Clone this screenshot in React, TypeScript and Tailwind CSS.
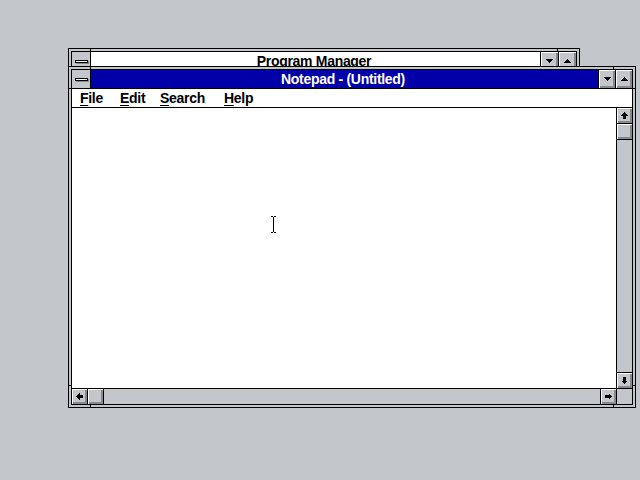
import type { ReactNode } from "react";

const FACE = "bg-[#c3c7cb]";
const RAISED =
  "bg-[#c3c7cb] shadow-[inset_1px_1px_0_#fff,inset_-1px_-1px_0_#868a8e,inset_-2px_-2px_0_#868a8e]";

function Tri({ up }: { up?: boolean }) {
  return (
    <svg width="7" height="4" viewBox="0 0 7 4" shapeRendering="crispEdges">
      <polygon points={up ? "3.5,0 7,4 0,4" : "0,0 7,0 3.5,4"} fill="#000" />
    </svg>
  );
}

function Arrow({ dir }: { dir: "up" | "down" | "left" | "right" }) {
  const rot = { up: 0, right: 90, down: 180, left: 270 }[dir];
  return (
    <svg width="7" height="7" viewBox="0 0 7 7" shapeRendering="crispEdges" style={{ transform: `rotate(${rot}deg)` }}>
      <polygon points="3.5,0 7,3.5 5,3.5 5,7 2,7 2,3.5 0,3.5" fill="#000" />
    </svg>
  );
}

function SysMenu() {
  return (
    <div className={`flex w-[18px] shrink-0 items-center justify-center ${FACE}`}>
      <div className="h-[3px] w-[13px] border border-black bg-white shadow-[1px_1px_0_#868a8e]" />
    </div>
  );
}

function CapButton({ up, w }: { up?: boolean; w: string }) {
  return (
    <div className={`flex shrink-0 items-center justify-center border-l border-black ${w} ${RAISED}`}>
      <Tri up={up} />
    </div>
  );
}

// resize notches drawn across the thick frame, 22px in from each corner
function Notches() {
  return (
    <>
      <div className="absolute left-[21px] top-0 h-[2px] w-px bg-black" />
      <div className="absolute right-[21px] top-0 h-[2px] w-px bg-black" />
      <div className="absolute bottom-0 left-[21px] h-[2px] w-px bg-black" />
      <div className="absolute bottom-0 right-[21px] h-[2px] w-px bg-black" />
      <div className="absolute left-0 top-[21px] h-px w-[2px] bg-black" />
      <div className="absolute bottom-[21px] left-0 h-px w-[2px] bg-black" />
      <div className="absolute right-0 top-[21px] h-px w-[2px] bg-black" />
      <div className="absolute bottom-[21px] right-0 h-px w-[2px] bg-black" />
    </>
  );
}

function Window({
  title,
  active,
  btnW,
  className,
  children,
}: {
  title: string;
  active?: boolean;
  btnW: string;
  className: string;
  children?: ReactNode;
}) {
  return (
    <div className={`absolute border border-black p-[2px] ${FACE} ${className}`}>
      <Notches />
      <div className="flex h-full flex-col border border-black">
        <div className="flex h-[19px] shrink-0 border-b border-black">
          <SysMenu />
          <div
            className={`flex min-w-0 flex-1 items-center justify-center overflow-hidden border-l border-black pr-[3px] text-[14px] leading-[18px] font-bold tracking-[-0.3px] ${
              active ? "bg-[#0000a8] text-white" : "bg-white text-black"
            }`}
          >
            {title}
          </div>
          <CapButton w={btnW} />
          <CapButton w={btnW} up />
        </div>
        {children}
      </div>
    </div>
  );
}

function MenuItem({ label, w }: { label: string; w: string }) {
  return (
    <div className={`${w} shrink-0 pl-2`}>
      <span className="underline decoration-1 underline-offset-[2px] [text-decoration-skip-ink:none]">{label[0]}</span>
      {label.slice(1)}
    </div>
  );
}

function ScrollBtn({ dir, edge }: { dir: "up" | "down" | "left" | "right"; edge: string }) {
  return (
    <div className={`flex h-[15px] w-[15px] shrink-0 items-center justify-center border-black ${edge} ${RAISED}`}>
      <Arrow dir={dir} />
    </div>
  );
}

export default function App() {
  return (
    <div className="relative h-[480px] w-[640px] overflow-hidden bg-[#c3c7cb] font-['Liberation_Sans',Arial,sans-serif]">
      <Window title="Program Manager" btnW="w-[18px]" className="left-[68px] top-[48px] h-[350px] w-[512px]" />

      <Window title="Notepad - (Untitled)" active btnW="w-[17px]" className="left-[68px] top-[66px] h-[342px] w-[568px]">
        <div className="flex h-[19px] shrink-0 border-b border-black bg-white text-[14px] leading-[18px] font-bold tracking-[-0.3px] text-black">
          <MenuItem label="File" w="w-[40px]" />
          <MenuItem label="Edit" w="w-[40px]" />
          <MenuItem label="Search" w="w-[64px]" />
          <MenuItem label="Help" w="w-[60px]" />
        </div>

        <div className="flex min-h-0 flex-1 flex-col">
          <div className="flex min-h-0 flex-1">
            <div className="relative flex-1 bg-white">
              <svg
                className="absolute left-[198px] top-[108px]"
                width="7"
                height="17"
                viewBox="0 0 7 17"
                shapeRendering="crispEdges"
              >
                <path d="M1 0.5h2M4 0.5h2M3.5 1v15M1 16.5h2M4 16.5h2" stroke="#000" strokeWidth="1" fill="none" />
              </svg>
            </div>
            <div className={`flex w-[16px] shrink-0 flex-col border-l border-black ${FACE}`}>
              <ScrollBtn dir="up" edge="border-b h-[16px]" />
              <div className={`h-[16px] w-[15px] shrink-0 border-b border-black ${RAISED}`} />
              <div className="flex-1" />
              <ScrollBtn dir="down" edge="border-t h-[16px]" />
            </div>
          </div>
          <div className={`flex h-[16px] shrink-0 border-t border-black ${FACE}`}>
            <ScrollBtn dir="left" edge="border-r w-[16px]" />
            <div className={`h-[15px] w-[16px] shrink-0 border-r border-black ${RAISED}`} />
            <div className="flex-1" />
            <ScrollBtn dir="right" edge="border-l w-[16px]" />
            <div className={`w-[16px] shrink-0 border-l border-black ${FACE}`} />
          </div>
        </div>
      </Window>
    </div>
  );
}
